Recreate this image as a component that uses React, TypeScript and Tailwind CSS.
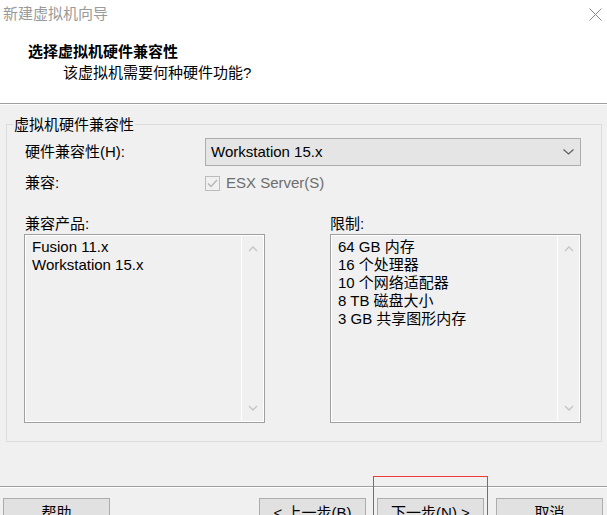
import React from "react";

function ScrollArrows() {
  return (
    <div className="w-[22px] h-full border-l border-white flex flex-col justify-between items-center py-[10px]">
      <svg width="10" height="6" viewBox="0 0 10 6">
        <path d="M1 5 L5 1 L9 5" fill="none" stroke="#c4c4c4" strokeWidth="1.3" />
      </svg>
      <svg width="10" height="6" viewBox="0 0 10 6">
        <path d="M1 1 L5 5 L9 1" fill="none" stroke="#c4c4c4" strokeWidth="1.3" />
      </svg>
    </div>
  );
}

function ListBox({ items, width }: { items: string[]; width: string }) {
  return (
    <div className={`${width} h-[189px] border border-[#a0a0a0] bg-[#f0f0f0]`}>
      <div className="h-full border border-white flex">
        <div className="flex-1 pl-[6px] pt-[2px] leading-[18px]">
          {items.map((t) => (
            <div key={t}>{t}</div>
          ))}
        </div>
        <ScrollArrows />
      </div>
    </div>
  );
}

function Btn({ label, className = "" }: { label: string; className?: string }) {
  return (
    <div
      className={`w-[107px] h-[30px] shrink-0 border border-[#adadad] bg-[#e1e1e1] flex items-center justify-center leading-[18px] ${className}`}
    >
      {label}
    </div>
  );
}

export default function App() {
  return (
    <div className="relative w-[607px] h-[515px] overflow-hidden bg-[#f0f0f0] text-black text-[15px] font-['Liberation_Sans','Noto_Sans_CJK_SC',sans-serif]">
      {/* header */}
      <div className="h-[103px] bg-white flex flex-col">
        <div className="h-[28px] flex items-center justify-between pl-[3px] pr-[5px]">
          <span className="text-[#9a9a9a] leading-[18px]">新建虚拟机向导</span>
          <svg width="13" height="13" viewBox="0 0 13 13">
            <path d="M0.5 0.5 L12.5 12.5 M12.5 0.5 L0.5 12.5" stroke="#8a8a8a" strokeWidth="1" fill="none" />
          </svg>
        </div>
        <div className="pl-[28px] mt-[15px] font-bold leading-[18px]">选择虚拟机硬件兼容性</div>
        <div className="pl-[63px] mt-[3px] leading-[18px]">该虚拟机需要何种硬件功能?</div>
      </div>
      <div className="h-px bg-[#a0a0a0]" />
      <div className="h-px bg-white" />

      {/* body */}
      <div className="pl-[6px] pt-[19px]">
        <div className="relative w-[596px] h-[318px] border border-[#dcdcdc]">
          <div className="absolute left-[6px] -top-[9px] px-px bg-[#f0f0f0] leading-[18px]">虚拟机硬件兼容性</div>
          <div className="pt-[13px] flex flex-col">
            <div className="flex items-center h-[28px] pl-[18px]">
              <div className="w-[180px] leading-[18px]">硬件兼容性(H):</div>
              <div className="w-[376px] h-[28px] border border-[#adadad] bg-[#e5e5e5] flex items-center justify-between pl-[5px] pr-[6px]">
                <span className="leading-[18px]">Workstation 15.x</span>
                <svg width="11" height="6" viewBox="0 0 11 6">
                  <path d="M0.5 0.5 L5.5 5 L10.5 0.5" fill="none" stroke="#606060" strokeWidth="1.2" />
                </svg>
              </div>
            </div>
            <div className="flex items-center h-[18px] mt-[8px] pl-[18px]">
              <div className="w-[180px] leading-[18px]">兼容:</div>
              <div className="w-[15px] h-[15px] border border-[#bcbcbc] bg-[#f0f0f0] flex items-center justify-center">
                <svg width="11" height="9" viewBox="0 0 11 9">
                  <path d="M1 4.5 L4 7.5 L10 1" fill="none" stroke="#b4b4b4" strokeWidth="1.3" />
                </svg>
              </div>
              <span className="ml-[6px] leading-[18px] text-[#6d6d6d]">ESX Server(S)</span>
            </div>
            <div className="flex mt-[23px] pl-[17px]">
              <div className="w-[241px] flex flex-col">
                <div className="pl-px leading-[18px]">兼容产品:</div>
                <div className="mt-px">
                  <ListBox width="w-[241px]" items={["Fusion 11.x", "Workstation 15.x"]} />
                </div>
              </div>
              <div className="w-[251px] ml-[65px] flex flex-col">
                <div className="leading-[18px]">限制:</div>
                <div className="mt-px">
                  <ListBox
                    width="w-[251px]"
                    items={["64 GB 内存", "16 个处理器", "10 个网络适配器", "8 TB 磁盘大小", "3 GB 共享图形内存"]}
                  />
                </div>
              </div>
            </div>
          </div>
        </div>
      </div>

      {/* footer */}
      <div className="mt-[44px] h-px bg-[#a0a0a0]" />
      <div className="h-px bg-white" />
      <div className="flex pl-[3px] mt-[10px]">
        <Btn label="帮助" />
        <Btn label="< 上一步(B)" className="ml-[149px]" />
        <Btn label="下一步(N) >" className="ml-[11px]" />
        <Btn label="取消" className="ml-[12px]" />
      </div>

      {/* annotation */}
      <div className="absolute left-[373px] top-[476px] w-[115px] h-[50px] border-[1.5px] border-[#f03a3a]" />
    </div>
  );
}
